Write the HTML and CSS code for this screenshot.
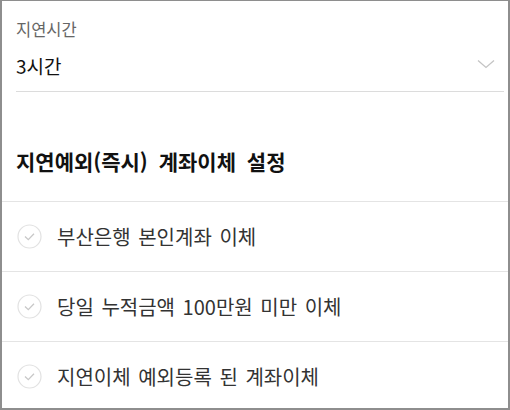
FILE: index.html
```html
<!DOCTYPE html>
<html lang="ko">
<head>
<meta charset="utf-8">
<link rel="stylesheet" href="styles.css">
</head>
<body>
<div class="frame">
  <div class="field">
    <div class="label">지연시간</div>
    <div class="select">
      <span class="value">3시간</span>
      <svg class="chevron" width="18" height="10" viewBox="0 0 18 10"><path d="M1 1.5 L9 8.5 L17 1.5" fill="none" stroke="#c4c4c4" stroke-width="1.3"/></svg>
    </div>
  </div>
  <div class="section-title">지연예외(즉시) 계좌이체 설정</div>
  <ul class="list">
    <li class="item">
      <svg class="check" width="25" height="25" viewBox="0 0 25 25"><circle cx="12.5" cy="12.5" r="11.5" fill="none" stroke="#e2e2e2" stroke-width="1.2"/><path d="M8 12.5 L11.3 15.7 L17 9.8" fill="none" stroke="#c8c8c8" stroke-width="1.3"/></svg>
      <span class="text">부산은행 본인계좌 이체</span>
    </li>
    <li class="item">
      <svg class="check" width="25" height="25" viewBox="0 0 25 25"><circle cx="12.5" cy="12.5" r="11.5" fill="none" stroke="#e2e2e2" stroke-width="1.2"/><path d="M8 12.5 L11.3 15.7 L17 9.8" fill="none" stroke="#c8c8c8" stroke-width="1.3"/></svg>
      <span class="text">당일 누적금액 100만원 미만 이체</span>
    </li>
    <li class="item">
      <svg class="check" width="25" height="25" viewBox="0 0 25 25"><circle cx="12.5" cy="12.5" r="11.5" fill="none" stroke="#e2e2e2" stroke-width="1.2"/><path d="M8 12.5 L11.3 15.7 L17 9.8" fill="none" stroke="#c8c8c8" stroke-width="1.3"/></svg>
      <span class="text">지연이체 예외등록 된 계좌이체</span>
    </li>
  </ul>
</div>
</body>
</html>
```
FILE: styles.css
```css
html, body {
  margin: 0;
  padding: 0;
  background: #ffffff;
}
.frame {
  box-sizing: border-box;
  width: 510px;
  height: 410px;
  border-top: 1px solid #8e8e8e;
  border-left: 2px solid #8e8e8e;
  border-right: 2px solid #8e8e8e;
  border-bottom: 2px solid #8e8e8e;
  overflow: hidden;
  font-family: "Noto Sans CJK KR", "Noto Sans", sans-serif;
  background: #fff;
}
.field {
  margin: 0 4px 0 14px;
  padding-top: 17px;
}
.label {
  font-size: 16.5px;
  line-height: 22px;
  color: #666;
}
.select {
  margin-top: 12px;
  height: 28px;
  padding-bottom: 11px;
  border-bottom: 1px solid #dcdcdc;
  display: flex;
  align-items: center;
  justify-content: space-between;
  padding-right: 9px;
}
.value {
  font-size: 19px;
  line-height: 28px;
  color: #111;
}
.chevron {
  display: block;
  margin-top: -4px;
}
.section-title {
  margin-top: 55px;
  padding: 0 0 26px 14px;
  font-size: 21px;
  line-height: 28px;
  font-weight: 700;
  word-spacing: 5px;
  color: #111;
  border-bottom: 1px solid #e4e4e4;
}
.list {
  list-style: none;
  margin: 0;
  padding: 0;
}
.item {
  box-sizing: border-box;
  height: 70px;
  display: flex;
  align-items: center;
  gap: 15px;
  padding-left: 15px;
  border-bottom: 1px solid #e4e4e4;
}
.check {
  display: block;
  flex: none;
}
.text {
  font-size: 20px;
  line-height: 28px;
  word-spacing: 2px;
  color: #333;
}
```
